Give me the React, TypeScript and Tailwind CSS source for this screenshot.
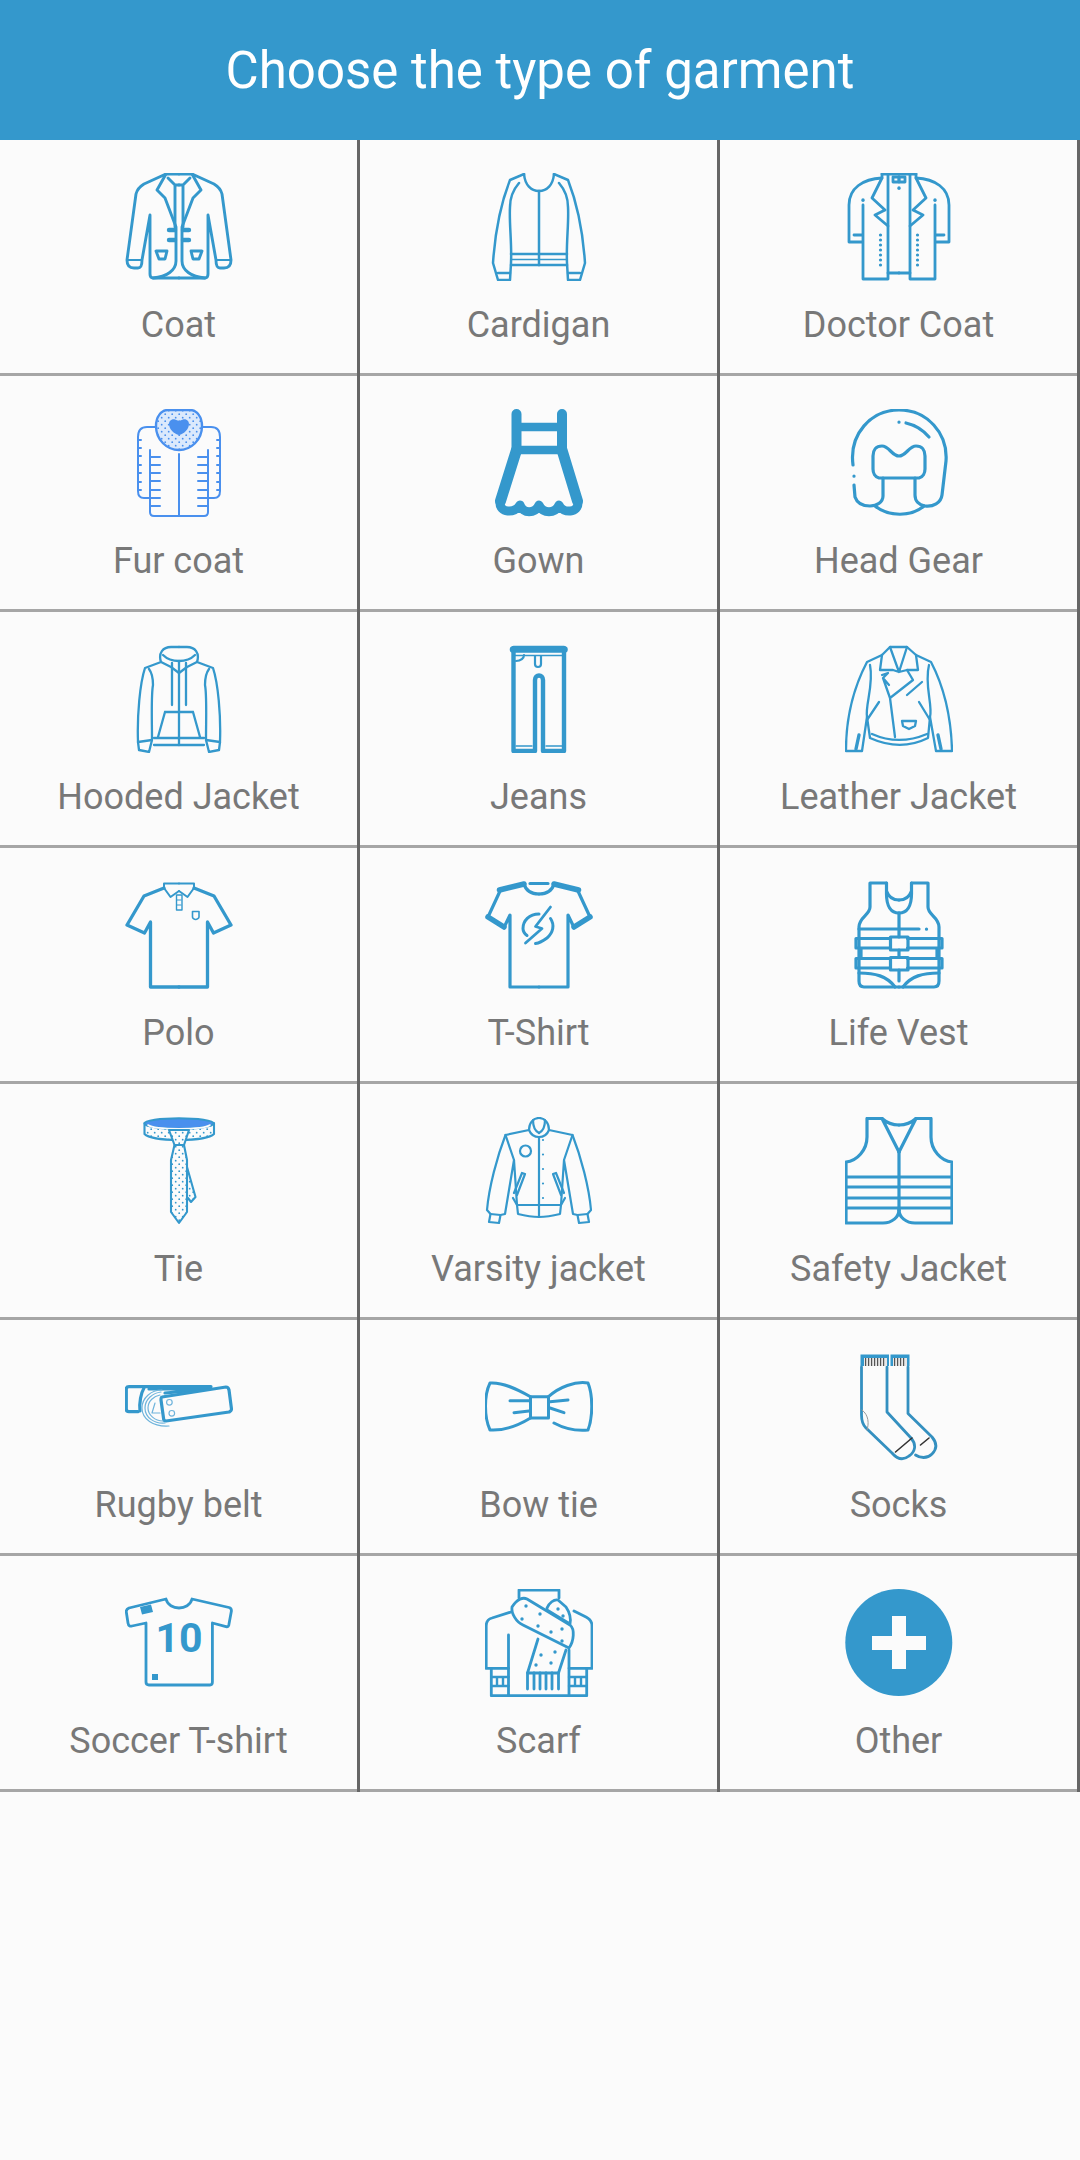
import type { ReactNode } from "react";

const BLUE = "#3498cc";
const FUR = "#4a90ee";
const PAGE = "#fbfbfb";

// mirrors a group about the middle of the 108 box
function Mirror({ children }: { children: ReactNode }) {
  return (
    <>
      {children}
      <g transform="matrix(-1 0 0 1 108 0)">{children}</g>
    </>
  );
}

function Icon({ sw = 3, color = BLUE, children }: { sw?: number; color?: string; children: ReactNode }) {
  return (
    <svg
      viewBox="0 0 108 108"
      className="block h-[108px] w-[108px]"
      fill="none"
      stroke={color}
      strokeWidth={sw}
      strokeLinecap="round"
      strokeLinejoin="round"
    >
      {children}
    </svg>
  );
}

function DotPattern({ id, color, bg }: { id: string; color: string; bg: string }) {
  return (
    <defs>
      <pattern id={id} width="7" height="7" patternUnits="userSpaceOnUse">
        <rect width="7" height="7" fill={bg} stroke="none" />
        <circle cx="1.7" cy="1.7" r="0.9" fill={color} stroke="none" />
        <circle cx="5.2" cy="5.2" r="0.9" fill={color} stroke="none" />
      </pattern>
    </defs>
  );
}

const Coat = () => (
  <Icon sw={2.9}>
    <Mirror>
      <path d="M54 1H41L19 11C14 14 12 17 11 21L2 87C2 93 5 95 9 95H13C16 95 17 93 17 87L25 42V101C25 104 26 105 28 105H54" />
      <path d="M2 87H17" strokeWidth="2" />
      <path d="M41 1L32 17L40 25L51 54V88C51 97 42 104 28 105" />
      <path d="M43 5L50 12H54M50 12V54" />
      <path d="M44 57H50M44 67H50" strokeWidth="4.4" />
      <path d="M31 78H42L40 86H34Z" />
    </Mirror>
  </Icon>
);

const Cardigan = () => (
  <Icon sw={2.5}>
    <Mirror>
      <path d="M39 1L25 7C16 30 10 60 8 90L13 107H25L26 90C27 70 24 50 25 34C25 25 28 17 34 10" />
      <path d="M39 1C40 12 46 18 54 18" />
      <path d="M26 81H54M26 92H54M13 100H25" />
      <path d="M26 86.5H54" strokeWidth="1.6" />
    </Mirror>
    <path d="M54 18V92" />
  </Icon>
);

const DoctorCoat = () => (
  <Icon sw={2.8}>
    <Mirror>
      <path d="M37 1H54M37 5C18 6 4 15 4 32V69H18M18 32V106H43V100H54M9 62H18" />
      <path d="M37 1L37 5L27 25L40 37L30 42L43 53V100" />
      <path d="M43 1V53" />
      <path d="M18 27V27.2" strokeWidth="3.4" />
      <path d="M35.5 62V95" strokeWidth="3.2" strokeDasharray="0 5" />
      <path d="M48 4H54V9H48Z" />
    </Mirror>
    <path d="M54 15V15.2" strokeWidth="3.4" />
  </Icon>
);

const FurCoat = () => (
  <Icon sw={2} color={FUR}>
    <DotPattern id="fur" color={FUR} bg="#dbe9fc" />
    <Mirror>
      <path d="M31 18H22C15 18 13 22 13 28V82C13 87 15 89 19 89H25M25 41V103C25 106 26 107 29 107H54" />
      <path d="M25 48H35M25 56H35M25 64H35M25 72H35M25 81H35M25 89H35M25 97H35" />
      <path d="M13 31H16M13 39H16M13 47H16M13 56H16M13 64H16M13 73H16M13 81H16" />
    </Mirror>
    <path d="M54 45V107" />
    <path
      d="M43 1H65C72 1 77 8 77 17C77 31 66 41 54 41C42 41 31 31 31 17C31 8 36 1 43 1Z"
      fill="url(#fur)"
      strokeWidth="2.4"
    />
    <path
      d="M44 15C44 11 48 9.5 50 10.5L54 12L58 10.5C60 9.5 64 11 64 15C64 20 59 25 54 26C49 25 44 20 44 15Z"
      fill={FUR}
      stroke="none"
    />
  </Icon>
);

const Gown = () => (
  <Icon sw={10}>
    <path d="M31.5 5V41M77 5V41" />
    <path d="M31.5 18H77M31.5 41H77" strokeWidth="8.5" />
    <path d="M31.5 41L15.5 92M77 41L92.5 92" strokeWidth="11" />
    <path d="M15 93C14 104 30 105 35 96C38 105 50 105 54 96C58 105 70 105 74 96C78 105 94 104 93 93" strokeWidth="9" />
  </Icon>
);

const HeadGear = () => (
  <Icon sw={3.2}>
    <path d="M8 56C4 25 26 1 54 1C82 1 103 24 101 52L97 86C96 94 88 98 80 97C74 96 70 92 70 86V69" />
    <path d="M9 76L10 88C12 94 18 97 25 97C32 97 38 93 38 87V69" />
    <path d="M30 97C44 108 66 108 79 97" />
    <path d="M34 69C30 68 28 64 28 60V47C28 41 31 37 37 37C44 37 47 47 54 47C61 47 64 37 71 37C77 37 80 41 80 47V60C80 64 78 68 74 69Z" />
    <path d="M61 14C70 16 78 21 84 28M54 13V13.2M9 67V67.2" />
  </Icon>
);

const Hooded = () => (
  <Icon sw={2.3}>
    <Mirror>
      <path d="M36 17C33 8 38 2 46 2H54M36 17L20 23C15 38 12 70 13 97L14 105L24 107L27 95C27 75 26 50 28 40C28 33 27 28 24 24" />
      <path d="M38 10C43 15 48 16 54 16M36 17L46 22L54 28" />
      <path d="M47 18V60" />
      <path d="M40 67H54M40 67L33 92M29 93H54M29 100H54M13 97L27 95" />
    </Mirror>
    <path d="M54 17V100" />
  </Icon>
);

const Jeans = () => (
  <Icon sw={4.4}>
    <path d="M28.5 3H79V106H58V35C58 29 50 29 50 35V106H28.5Z" />
    <path d="M28 4.5H79.5" strokeWidth="6.5" />
    <path d="M30 10.5H78M31 101H47M61 101H77" strokeWidth="1.4" />
    <path d="M31 16C36 16 39 13 39 10M50 11V19C50 23 56 23 56 19V11" strokeWidth="2.2" />
  </Icon>
);

const Leather = () => (
  <Icon sw={2.3}>
    <path d="M45 2H62L71 10L86 17C98 40 106 70 107 105V106H91L85 72L83 93C65 102 45 102 25 93L22 72L17 106H1V105C1 70 10 40 22 17L37 10Z" />
    <path d="M25 20C29 40 20 60 22 72M84 20C79 40 88 60 85 72M27 89C45 97 63 97 82 89" />
    <path d="M45 2L54 27L62 2M37 10L35 25H48L54 27L62 25H73L71 10" />
    <path d="M37 30L43 28L38 33L45 53L68 35L62 25M45 53L50 92M38 33L44 40" />
    <path d="M22 75L34 57M85 75L74 57M62 50L77 37" />
    <path d="M57 76H71L70 81L64 84L58 81Z" />
    <path d="M11 104L14 90M96 104L93 90" strokeWidth="3.4" />
  </Icon>
);

const Polo = () => (
  <Icon sw={3.3}>
    <Mirror>
      <path d="M54 106H25.5V41L19.5 52L2 44L19 15L39 7" />
      <path d="M39 2.5H54M39 2.5V7L45.5 16L54 10" strokeWidth="2" />
    </Mirror>
    <path d="M51.5 14H57V29H51.5Z" strokeWidth="1.4" />
    <path d="M52 19H56M52 24H56" strokeWidth="1.2" />
    <path d="M67.5 30.5H74V36C74 37 72 38.5 70.7 38.5C69 38.5 67.5 37 67.5 36Z" strokeWidth="1.6" />
  </Icon>
);

const TShirt = () => (
  <Icon sw={3.2}>
    <Mirror>
      <path d="M54 106H25V34L19 46.5L3 36L15.5 9L39 3" />
      <path d="M14.5 9L39 3M3 36L19 46" strokeWidth="5.5" />
      <path d="M39 3C41 10 47 13 54 13M45 2.5H54" />
    </Mirror>
    <path d="M54 33C44 33 38 40 38 47.5C38 50 40 53 42 54.5M65.5 37.5C70 44 68 52 62 57C58 60 54 62 50.5 62.5" strokeWidth="3" />
    <path d="M65.5 26L50.5 45.5L57 47.5L40.5 62" strokeWidth="2.8" />
  </Icon>
);

const LifeVest = () => (
  <Icon sw={3.2}>
    <Mirror>
      <path d="M41.5 2H25V26C25 34 14 36 14 46V100C14 104 16 106 19 106H54" />
      <path d="M41.5 2V13C41.5 25 46 32 54 32M41.5 10C44 17 48 19 54 19" />
      <path d="M45.5 57.5H11V67H45.5M45.5 77.5H11V87H45.5M16 67V77" />
      <path d="M14 92C30 92 42 95 50 106" />
    </Mirror>
    <path d="M54 32V56M54 69V76M54 89V100M14 48H74M81.5 48V48.2" />
    <path d="M45.5 56H63V69H45.5ZM45.5 76.5H63V89H45.5Z" />
  </Icon>
);

const Tie = () => (
  <Icon sw={2.1}>
    <DotPattern id="tie" color={BLUE} bg={PAGE} />
    <path d="M19.5 6V17C27 25 81 25 89 17V6Z" fill="url(#tie)" />
    <ellipse cx="54" cy="6.5" rx="34.5" ry="5.2" fill={FUR} />
    <path d="M23 8C30 13 78 13 85 8" stroke={PAGE} strokeWidth="1.6" />
    <path d="M62 50L70.5 80L66 85L63 81" fill="url(#tie)" />
    <path d="M49.5 28L46 43V95L54 106L62 95V43L59 28Z" fill="url(#tie)" />
    <path d="M44 13H64L59 28H49.5Z" fill="url(#tie)" />
  </Icon>
);

const Varsity = () => (
  <Icon sw={2.2}>
    <Mirror>
      <path d="M54 1C48 1 44 6 44 13L20.5 18C12 40 4 70 2 93L5.5 97L4 105L14 106L15.5 98L20 97L29 43L32 88L33 97C45 100 50 100 54 100" />
      <path d="M44 13C46 18 50 20 54 20M48 3C48 10 50 14 54 16" />
      <path d="M20.5 18L29 43M5.5 97L15.5 98M28 81L32 88H54M29 76L37 56L40 57L32 78" />
    </Mirror>
    <path d="M54 20V100" />
    <circle cx="40.5" cy="34" r="5.5" />
    <path d="M58 23V94" strokeWidth="2.2" strokeDasharray="0 14.5" />
  </Icon>
);

const Safety = () => (
  <Icon sw={3.2}>
    <Mirror>
      <path d="M37 1.5H22V20C22 33 12 44 1 45V106H38C47 106 54 100 54 93" />
      <path d="M37 1.5C42 6 48 8 54 8M37 1.5L54 35" />
      <path d="M1 60H54M1 70H54M1 81H54M1 91H54" />
    </Mirror>
    <path d="M54 35V93" />
  </Icon>
);

const Belt = () => (
  <Icon sw={3.2}>
    <path d="M13 58.7H4C2 58.7 1.3 58 1.3 56V36C1.3 34.5 2 33.7 4 33.7H86" />
    <path d="M19 35C16 40 14 50 15 58M24 36H85L40 40" strokeWidth="3.2" />
    <path d="M37 44L101 34C103 34 103.5 35 104 37L106.5 56C106.5 58 106 58 104 59L41 68C39 68 38.5 67 38.5 65L36 47C36 45 36 44 37 44Z" fill={PAGE} />
    <g stroke="#6fb4dc" strokeWidth="1.2">
      <path d="M37 37C26 37 17 45 17 55C17 66 28 74 44 73" />
      <path d="M36 39C28 40 20 46 20 55C20 65 30 71 40 70" />
      <path d="M35 42C29 43 23 48 23 55C23 62 30 68 38 68" />
      <path d="M27 60L30 50M27 60H35" />
      <circle cx="44.4" cy="49.3" r="2.8" />
      <circle cx="46.8" cy="60.3" r="2.8" />
    </g>
  </Icon>
);

const BowTie = () => (
  <Icon sw={3}>
    <path d="M45.5 43.7H63.5V65H45.5Z" />
    <path d="M45.5 43.7C32 36 18 29 5 30C-1 42 -1 64 5 77C20 78 34 72 45.5 65" />
    <path d="M63.5 43.7C74 34 90 28 103 30C108 42 108 64 103 77C92 78 80 76 69 70" />
    <path d="M25 47.7H44M29 59.7L44 58M65 48.7L83 47M65 55L79 59.7" />
  </Icon>
);

const Socks = () => (
  <Icon sw={2.8} color="#3490c0">
    <path d="M16.5 14V62C16.5 68 18 72 21 75L47 100C53 107 59 107 64 103C70 99 72 92 66 85L42 59V14" />
    <path d="M63 14V60.5L87 84C92 90 92 96 87 101C82 106 75 105 70.5 102" />
    <path d="M15.5 1.5H44V13H15.5ZM45.5 1.5H64.5V13H45.5Z" fill={BLUE} stroke="none" />
    <path d="M19 5H42V13H19ZM48 5H62V13H48Z" fill="#e8e8e8" stroke="none" />
    <path d="M20 9H41" stroke="#555" strokeWidth="8" strokeDasharray="1.2 1.8" strokeLinecap="butt" />
    <path d="M49 9H61" stroke="#555" strokeWidth="8" strokeDasharray="1.2 1.8" strokeLinecap="butt" />
    <path d="M50.5 99L67 85M75.5 92L84 85" stroke="#333" strokeWidth="1.6" />
    <path d="M17 57C24 62 24 71 22 77" stroke="#999" strokeWidth="1" />
  </Icon>
);

const SoccerShirt = () => (
  <Icon sw={2.8}>
    <path d="M41 10L4 19C2 20 1 21 1.3 23L3 34C3.5 37 5 37.5 7 37L21 34V93C21 95 22 96 24 96H85C87 96 87.4 95 87.4 93V34L101 37.7C103 38 104 37 104 35L106.4 22C106.5 20 106 19 104 18.5L67 10C64 22 44 22 41 10Z" />
    <path d="M15 18L26 15.5L28 23L17 25.5Z" fill={BLUE} stroke="none" />
    <path d="M27 85H33V91H27Z" fill={BLUE} stroke="none" />
    <text x="54" y="63" textAnchor="middle" fontFamily="Roboto, sans-serif" fontWeight="700" fontSize="41" fill={BLUE} stroke="none">10</text>
  </Icon>
);

const Scarf = () => (
  <Icon sw={2.8}>
    <path d="M34 9V1H74V9" />
    <path d="M29 22L7 29C3 30 1.2 33 1.2 37V79.3H23.5M89 22L101 28C105 30 107 33 107 37V79.3H84" />
    <path d="M6.3 79.3V106.7H101.7V79.3M23.5 46V106.7M84 61V106.7" />
    <path d="M6.3 88H23.5M6.3 97H23.5M84 88H101.7M84 97H101.7M12 88V97M18 88V97M90 88V97M96 88V97" strokeWidth="2.4" />
    <path d="M27 18C32 10 38 8 42 10L85 36C90 40 89 52 84 59L38 36C31 33 26 24 27 18Z" fill={PAGE} />
    <path d="M62 19C64 14 69 10 73 11L81 18C85 24 86 30 85 35L62 21Z" fill={PAGE} />
    <path d="M53 50L42.5 84H73.5L81 61" fill={PAGE} />
    <path d="M42.5 84V100M49 84V100M55 84V100M61 84V100M67 84V100M73.5 84V100" />
    <g fill={BLUE} stroke="none">
      <circle cx="41" cy="17" r="1.7" /><circle cx="55" cy="25" r="1.7" /><circle cx="37" cy="30" r="1.7" />
      <circle cx="53" cy="37" r="1.7" /><circle cx="66" cy="43" r="1.7" /><circle cx="77" cy="40" r="1.7" />
      <circle cx="77" cy="52" r="1.7" /><circle cx="73" cy="20" r="1.7" /><circle cx="78" cy="27" r="1.7" />
      <circle cx="56" cy="66" r="1.7" /><circle cx="70" cy="63" r="1.7" /><circle cx="51" cy="76" r="1.7" />
      <circle cx="66" cy="74" r="1.7" />
    </g>
  </Icon>
);

const Plus = () => (
  <Icon sw={0}>
    <circle cx="53.8" cy="53.5" r="53.5" fill={BLUE} />
    <path d="M47 27H61V47H81V61H61V80H47V61H27V47H47Z" fill={PAGE} />
  </Icon>
);

const garments = [
  { name: "Coat", icon: <Coat /> },
  { name: "Cardigan", icon: <Cardigan /> },
  { name: "Doctor Coat", icon: <DoctorCoat /> },
  { name: "Fur coat", icon: <FurCoat /> },
  { name: "Gown", icon: <Gown /> },
  { name: "Head Gear", icon: <HeadGear /> },
  { name: "Hooded Jacket", icon: <Hooded /> },
  { name: "Jeans", icon: <Jeans /> },
  { name: "Leather Jacket", icon: <Leather /> },
  { name: "Polo", icon: <Polo /> },
  { name: "T-Shirt", icon: <TShirt /> },
  { name: "Life Vest", icon: <LifeVest /> },
  { name: "Tie", icon: <Tie /> },
  { name: "Varsity jacket", icon: <Varsity /> },
  { name: "Safety Jacket", icon: <Safety /> },
  { name: "Rugby belt", icon: <Belt /> },
  { name: "Bow tie", icon: <BowTie /> },
  { name: "Socks", icon: <Socks /> },
  { name: "Soccer T-shirt", icon: <SoccerShirt /> },
  { name: "Scarf", icon: <Scarf /> },
  { name: "Other", icon: <Plus /> },
];

export default function App() {
  return (
    <div className="min-h-[2160px] w-[1080px] bg-[#fbfbfb] font-['Roboto',sans-serif]">
      {/* Header */}
      <div className="flex h-[140px] items-center justify-center bg-[#3498cc] pt-[2px] text-[51px] text-white">
        Choose the type of garment
      </div>
      {/* Garment grid */}
      <div className="grid grid-cols-3">
        {garments.map((item) => (
          <div key={item.name} className="border-r-[3px] border-[#666666]">
            <div className="flex h-[236px] flex-col items-center border-b-[3px] border-[#a6a6a6] pt-[33px]">
              {item.icon}
              <span className="mt-[24px] text-[36px] leading-[40px] text-[#787878]">{item.name}</span>
            </div>
          </div>
        ))}
      </div>
    </div>
  );
}
